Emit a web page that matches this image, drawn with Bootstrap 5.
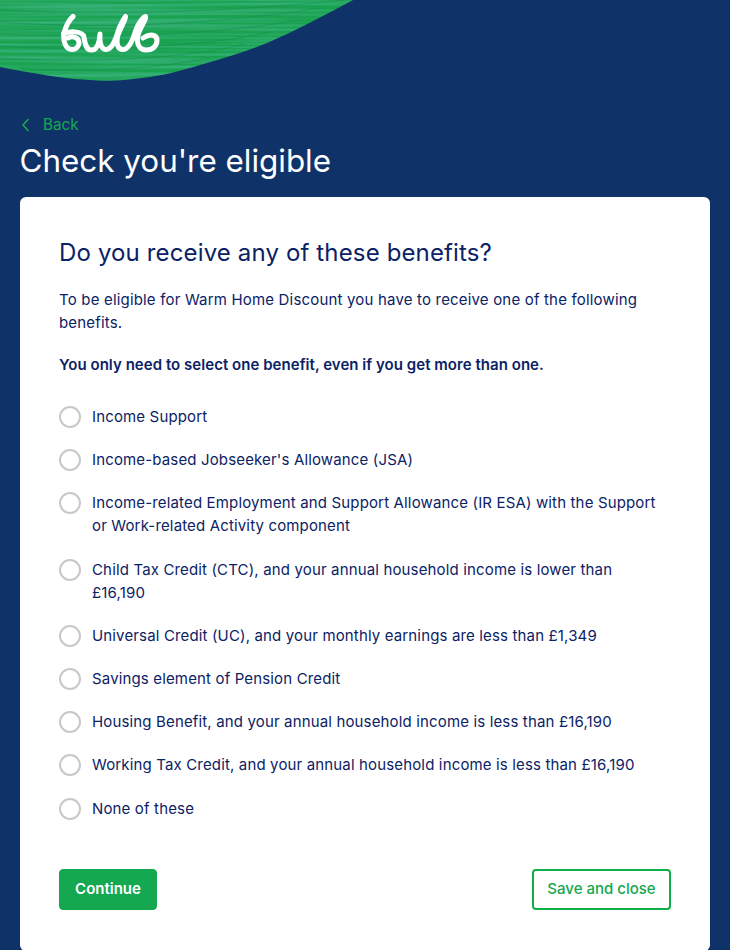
<!DOCTYPE html>
<html lang="en"><head><meta charset="utf-8"><title>Check you're eligible</title>
<link href="https://cdn.jsdelivr.net/npm/bootstrap@5.3.0/dist/css/bootstrap.min.css" rel="stylesheet">
<style>
html,body{height:950px;overflow:hidden}
body{background:#0f3368;font-family:Inter,"Liberation Sans",sans-serif;color:#0b2265}
.hero{height:113px}
.hero svg{display:block}
.logo-mark{left:60px;top:13px}
.back-link{color:#17a850;font-size:15.2px;line-height:24px;height:24px}
.page-title{color:#fff;font-size:31.4px;font-weight:400;line-height:44px;margin:2px 0 14px -.5px;letter-spacing:0}
.form-sheet{border-radius:6px;border:0;padding:39px 39px 0;height:754px;color:#0b2265}
.form-title{font-size:24px;font-weight:400;line-height:34px;margin-bottom:18px;letter-spacing:.14px}
.intro-text{font-size:15px;line-height:23px;letter-spacing:.18px;margin-bottom:19px}
.strong-text{font-size:15px;line-height:23px;font-weight:600;letter-spacing:.04px;margin-bottom:29px}
.choice{gap:11px;font-size:15px;line-height:23px;letter-spacing:.15px;margin-bottom:20.2px;padding-right:8px}
.choice-dot{width:22px;height:22px;border:2px solid #c8c8c8;border-radius:50%;flex:none;margin-top:1px}
.act-row{margin-top:29px}
.act-main{background:#14a850;border-color:#14a850;color:#fff;font-weight:600;font-size:15px;width:98px;height:41px;border-radius:4px;padding:0}
.act-alt{background:#fff;border:2px solid #0fae48;color:#14a850;font-weight:500;font-size:15px;width:139px;height:41px;border-radius:4px;padding:0}
</style></head>
<body>
<header class="hero position-relative">
<svg width="730" height="113" viewBox="0 0 730 113" aria-hidden="true">
<defs>
<filter id="brush" x="0" y="0" width="100%" height="100%"><feTurbulence type="fractalNoise" baseFrequency=".004 .32" numOctaves="2" seed="7"/><feColorMatrix values="0 0 0 0 .07  0 0 0 0 .50  0 0 0 0 .30  1.6 0 0 0 -.6"/></filter>
<clipPath id="sw"><path d="M0 0H353C325 15 297 30 267 43C245 52 222 59 200 65C178 72 155 77 133 79C118 81 104 81 90 80C70 79 50 76 33 73C20 71 10 69 0 67Z"/></clipPath>
</defs>
<g clip-path="url(#sw)">
<rect width="360" height="90" fill="#1aa250"/>
<rect width="360" height="90" filter="url(#brush)"/>
<g fill="none" stroke="#13894f" stroke-width=".9" opacity=".5">
<path d="M0 10C100 16 230 12 345 0"/><path d="M0 22C100 30 220 24 320 8"/><path d="M0 34C100 40 220 34 300 20"/><path d="M0 46C100 52 210 46 270 32"/><path d="M0 58C90 64 190 58 245 44"/><path d="M20 68C80 74 160 68 210 58"/>
</g>
</g>
</svg>
<svg class="logo-mark position-absolute" width="102" height="42" viewBox="0 0 102 42" fill="none" stroke="#fff" stroke-width="5" stroke-linecap="round" stroke-linejoin="round" aria-label="bulb logo">
<path d="M13 3.500C9 7 6 13 4 20C2.800 28 5.500 36.500 12 36.500C17.500 36.500 20 31.500 18.500 27.500C17 23.500 11.500 23 8 25"/>
<path d="M3.500 20.500C10 18 20 18 23.500 22.500C25 27 24.500 37 31.500 37C37.500 37 39.500 28 40 21C39.500 28 40.500 36.500 46 36.500C52 36.500 55.500 27 58.500 17C60.500 11 65 4 65.500 3.500C66.500 6 59 17 57.500 24C56.500 30 57 36.500 63 36.500C68.500 36.500 72.500 28 75.500 18C77.500 12 83 3.500 85.500 3.500C87 5.500 79.500 15 77.800 23C76.500 31 79 37 86.500 37C92.500 37 97 33 97 27.500C97 22 91 20 83 25"/>
</svg>
</header>
<main class="px-3 mx-1">
<a class="back-link d-flex align-items-center text-decoration-none" href="#"><svg class="me-2" width="11" height="14" viewBox="0 0 11 14" fill="none" stroke="#17a850" stroke-width="1.6" stroke-linecap="round" stroke-linejoin="round" aria-hidden="true"><path d="M8 1.500 3 7l5 5.500"/></svg><span class="ms-1">Back</span></a>
<h1 class="page-title">Check you're eligible</h1>
<section class="card form-sheet">
<h2 class="form-title">Do you receive any of these benefits?</h2>
<p class="intro-text">To be eligible for Warm Home Discount you have to receive one of the following benefits.</p>
<p class="strong-text">You only need to select one benefit, even if you get more than one.</p>
<div class="d-flex choice"><span class="choice-dot"></span><span>Income Support</span></div>
<div class="d-flex choice"><span class="choice-dot"></span><span>Income-based Jobseeker's Allowance (JSA)</span></div>
<div class="d-flex choice"><span class="choice-dot"></span><span>Income-related Employment and Support Allowance (IR ESA) with the Support or Work-related Activity component</span></div>
<div class="d-flex choice"><span class="choice-dot"></span><span>Child Tax Credit (CTC), and your annual household income is lower than £16,190</span></div>
<div class="d-flex choice"><span class="choice-dot"></span><span>Universal Credit (UC), and your monthly earnings are less than £1,349</span></div>
<div class="d-flex choice"><span class="choice-dot"></span><span>Savings element of Pension Credit</span></div>
<div class="d-flex choice"><span class="choice-dot"></span><span>Housing Benefit, and your annual household income is less than £16,190</span></div>
<div class="d-flex choice"><span class="choice-dot"></span><span>Working Tax Credit, and your annual household income is less than £16,190</span></div>
<div class="d-flex choice"><span class="choice-dot"></span><span>None of these</span></div>
<div class="d-flex justify-content-between act-row">
<button class="btn act-main" type="button">Continue</button>
<button class="btn act-alt" type="button">Save and close</button>
</div>
</section>
</main>
<script src="https://cdn.jsdelivr.net/npm/bootstrap@5.3.0/dist/js/bootstrap.bundle.min.js"></script>
</body></html>
